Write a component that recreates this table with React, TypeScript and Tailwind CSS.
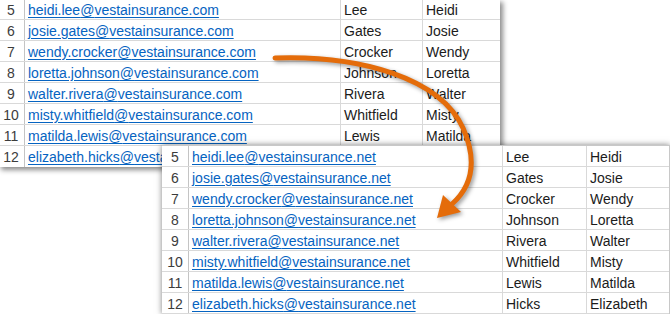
import React from 'react';

type Person = { n: number; user: string; last: string; first: string };

const people: Person[] = [
  { n: 5, user: 'heidi.lee', last: 'Lee', first: 'Heidi' },
  { n: 6, user: 'josie.gates', last: 'Gates', first: 'Josie' },
  { n: 7, user: 'wendy.crocker', last: 'Crocker', first: 'Wendy' },
  { n: 8, user: 'loretta.johnson', last: 'Johnson', first: 'Loretta' },
  { n: 9, user: 'walter.rivera', last: 'Rivera', first: 'Walter' },
  { n: 10, user: 'misty.whitfield', last: 'Whitfield', first: 'Misty' },
  { n: 11, user: 'matilda.lewis', last: 'Lewis', first: 'Matilda' },
  { n: 12, user: 'elizabeth.hicks', last: 'Hicks', first: 'Elizabeth' },
];

// column width classes: row header, email, last name, first name
type Cols = [string, string, string, string];

function Sheet({ domain, cols, className }: { domain: string; cols: Cols; className: string }) {
  return (
    <div className={className}>
      {people.map((p) => (
        <div key={p.n} className="flex h-[21px] border-b border-[#d9d9d9]">
          <div className={`${cols[0]} shrink-0 flex items-center justify-center border-r border-[#c4c4c4] text-[#3c3c3c] pt-[1px]`}>
            {p.n}
          </div>
          <div className={`${cols[1]} shrink-0 flex items-center pl-[3px] border-r border-[#d9d9d9] pt-[1px]`}>
            <span className="text-[#0563c1] underline underline-offset-[2px] decoration-[1px]">
              {p.user}@{domain}
            </span>
          </div>
          <div className={`${cols[2]} shrink-0 flex items-center pl-[3px] border-r border-[#d9d9d9] text-[#1b1b1b] pt-[1px]`}>
            {p.last}
          </div>
          <div className={`${cols[3]} shrink-0 flex items-center pl-[3px] text-[#1b1b1b] pt-[1px]`}>
            {p.first}
          </div>
        </div>
      ))}
    </div>
  );
}

function Arrow() {
  return (
    <svg
      width="670"
      height="314"
      viewBox="0 0 670 314"
      className="absolute inset-0 pointer-events-none [filter:drop-shadow(2px_2px_2px_rgba(0,0,0,0.4))]"
    >
      <path
        d="M275 58 C 360 55, 440 78, 463 128 C 478 162, 472 186, 452 204"
        fill="none"
        stroke="#e46c0a"
        strokeWidth="5"
        strokeLinecap="round"
      />
      <polygon points="437,218 443,195 461,212" fill="#e46c0a" />
    </svg>
  );
}

export default function App() {
  return (
    <main className="relative w-[670px] h-[314px] overflow-hidden bg-white font-['Liberation_Sans',Arial,sans-serif] text-[14px] leading-[16px]">
      <Sheet
        domain="vestainsurance.com"
        cols={['w-[27px]', 'w-[316px]', 'w-[82px]', 'w-[77px]']}
        className="absolute left-[-2px] top-[-1px] w-[502px] bg-white shadow-[3px_3px_5px_rgba(0,0,0,0.45)] [&>div:last-child]:border-b-0"
      />
      <Sheet
        domain="vestainsurance.net"
        cols={['w-[27px]', 'w-[314px]', 'w-[84px]', 'w-[82px]']}
        className="absolute left-[162px] top-[145px] w-[508px] bg-white border-t border-r border-[#c8c8c8] shadow-[0_0_6px_rgba(0,0,0,0.5)]"
      />
      <Arrow />
    </main>
  );
}
